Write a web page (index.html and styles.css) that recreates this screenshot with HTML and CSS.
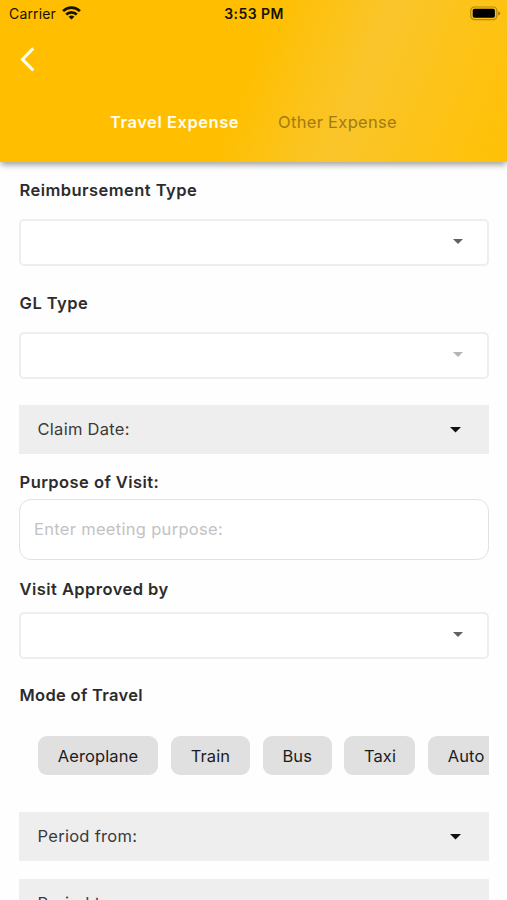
FILE: index.html
```html
<!DOCTYPE html>
<html lang="en">
<head>
<meta charset="utf-8">
<title>Travel Expense</title>
<link rel="stylesheet" href="styles.css">
</head>
<body>
<div class="screen">
  <header class="header">
    <div class="status">
      <div class="carrier"><span class="carrier-name">Carrier</span>
        <svg class="wifi" width="19" height="14" viewBox="0 0 19 14" fill="none" stroke="#171200" stroke-width="2.7"><path d="M1.1 5.1a12 12 0 0 1 16.8 0"/><path d="M4.2 8.5a7.6 7.6 0 0 1 10.6 0"/><path d="M9.5 13.6 6.6 10.8a4.2 4.2 0 0 1 5.8 0Z" fill="#171200" stroke="none"/></svg>
      </div>
      <div class="time"><span>3:53 PM</span></div>
      <div class="power">
        <svg width="31" height="15" viewBox="0 0 31 15"><rect x=".8" y="1" width="26" height="12.6" rx="3.6" fill="none" stroke="#b08a12" stroke-width="1.2"/><rect x="2.7" y="2.8" width="22.2" height="9" rx="1.8" fill="#000"/><path d="M28.2 5.2q2 .8 2 2.2t-2 2.2Z" fill="#9b7a0c"/></svg>
      </div>
    </div>
    <div class="nav">
      <svg width="16" height="26" viewBox="0 0 16 26" fill="none" stroke="#fffdf0" stroke-width="3"><path d="M14.2 2.4 3.4 13.4l10.8 11"/></svg>
    </div>
    <nav class="tabs"><span class="tab active"><span>Travel Expense</span></span><span class="tab"><span>Other Expense</span></span></nav>
  </header>
  <main class="form">
    <label class="label">Reimbursement Type</label>
    <div class="select"><i class="caret"></i></div>
    <label class="label gl">GL Type</label>
    <div class="select"><i class="caret muted"></i></div>
    <div class="date claim"><span class="t-claim">Claim Date:</span><i class="caret big"></i></div>
    <label class="label purpose">Purpose of Visit:</label>
    <div class="input"><span>Enter meeting purpose:</span></div>
    <label class="label approved">Visit Approved by</label>
    <div class="select"><i class="caret"></i></div>
    <label class="label mode">Mode of Travel</label>
    <div class="chips">
      <span class="chip aeroplane">Aeroplane</span><span class="chip train">Train</span><span class="chip bus">Bus</span><span class="chip taxi">Taxi</span><span class="chip auto">Auto</span>
    </div>
    <div class="date"><span>Period from:</span><i class="caret big"></i></div>
    <div class="date to"><span>Period to:</span><i class="caret big"></i></div>
  </main>
</div>
</body>
</html>
```
FILE: styles.css
```css
* { box-sizing: border-box; }
body { margin: 0; background: #fefefe; font-family: Inter, "Liberation Sans", sans-serif; color: #2c2c2e; }
.screen { width: 507px; height: 900px; overflow: hidden; }
svg { display: block; flex: none; }
.header {
  height: 162px;
  background: linear-gradient(112deg, #ffbf00 0%, #ffbf00 48%, #f9c52b 69%, #fcc31b 81%, #ffc107 98%);
  box-shadow: 0 4px 6px -1px rgba(0, 0, 0, .36);
}
.status { display: grid; grid-template-columns: 1fr auto 1fr; height: 28px; padding: 0 6px 0 9px; align-items: center; color: #171200; font-size: 14px; line-height: 28px; }
.carrier { display: flex; gap: 6px; align-items: center; }
.carrier-name { letter-spacing: .15px; }
.wifi { margin-top: -2px; }
.time { font-weight: 600; letter-spacing: .45px; margin-left: -2px; }
.power { display: flex; justify-content: flex-end; margin-top: -2px; }
.nav { height: 64px; padding: 18px 0 0 19px; }
.tabs { display: flex; padding-left: 110px; gap: 39px; font-size: 16.5px; line-height: 60px; color: #a17b12; letter-spacing: .3px; }
.active { color: #fffdf0; font-weight: 600; letter-spacing: .54px; }
.form { padding: 18px 18.5px 0 19px; }
.label { display: block; font-size: 16.5px; line-height: 20px; font-weight: 600; letter-spacing: .44px; margin-bottom: 19px; padding-left: .6px; white-space: nowrap; }
.select { height: 47px; border: 2px solid #eee; border-radius: 5px; background: #fff; display: flex; align-items: center; justify-content: flex-end; padding: 0 23.5px 2px 0; }
.gl { margin-top: 27px; margin-bottom: 19px; }
.caret { width: 10px; height: 5px; background: #616161; clip-path: polygon(0 0, 100% 0, 50% 100%); }
.muted { background: #b5b5b5; }
.big { width: 12px; height: 6px; background: #111; }
.date { height: 49px; background: #eee; display: flex; align-items: center; justify-content: space-between; padding: 0 27px 0 18.5px; font-size: 16.5px; letter-spacing: .28px; color: #3a3a3c; }
.date span { padding-bottom: 1px; }
.claim { margin-top: 26px; }
.purpose { margin: 18px 0 7px; }
.input { height: 61px; border: 1.5px solid #e2e2e2; border-radius: 12px; background: #fff; padding: 0 14px 2px 14px; display: flex; align-items: center; color: #c2c2c4; font-size: 16.5px; letter-spacing: .3px; }
.approved { margin: 19px 0 13px; }
.mode { margin: 26px 0 31px; letter-spacing: .3px; }
.chips { display: flex; gap: 12.6px; padding-left: 18.7px; overflow: hidden; margin-bottom: 37px; }
.chip { flex: none; height: 39px; border-radius: 9px; background: #e0e0e0; color: #1c1c1e; font-size: 16.5px; line-height: 40px; text-align: center; letter-spacing: .1px; }
.aeroplane { width: 120.7px; }
.train { width: 79px; }
.bus { width: 69.3px; }
.taxi { width: 71px; }
.auto { width: 76px; }
.to { margin-top: 18px; }
```
